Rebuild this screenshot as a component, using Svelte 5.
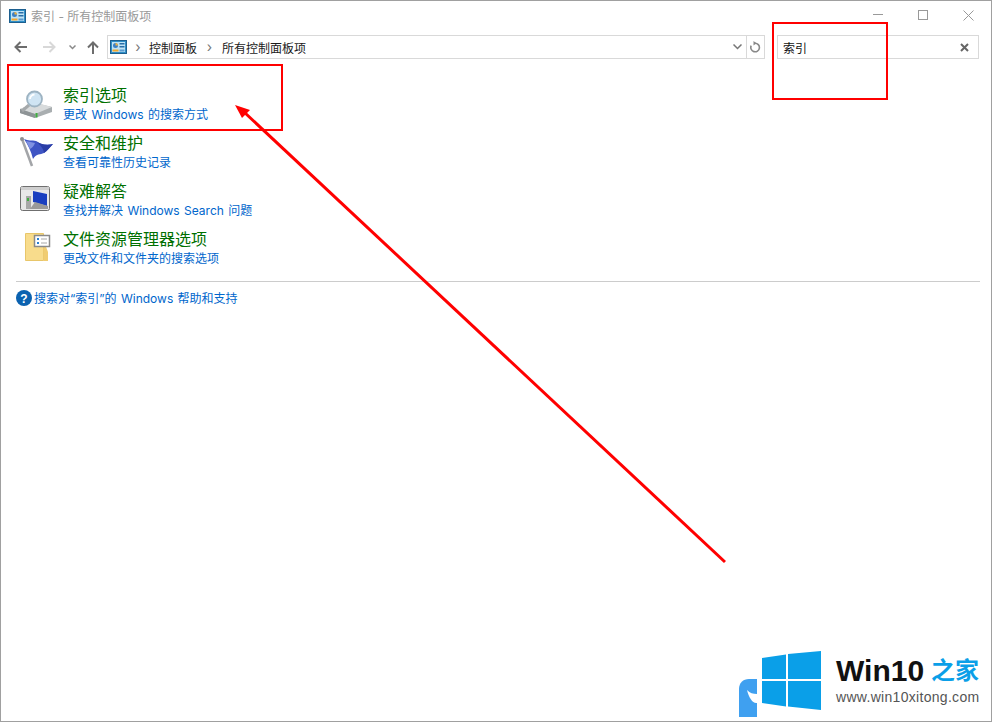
<script>
  const items = [
    { id: 'index', title: '索引选项', desc: '更改 Windows 的搜索方式' },
    { id: 'flag', title: '安全和维护', desc: '查看可靠性历史记录' },
    { id: 'trouble', title: '疑难解答', desc: '查找并解决 Windows Search 问题' },
    { id: 'folder', title: '文件资源管理器选项', desc: '更改文件和文件夹的搜索选项' }
  ];
</script>

{#snippet cpIcon()}
  <svg class="cp" width="17" height="14" viewBox="0 0 17 14">
    <rect x="0.5" y="0.5" width="16" height="13" fill="#2f8fc8" stroke="#1d5f8f" />
    <rect x="2" y="2" width="13" height="10" fill="#bfe3f5" />
    <circle cx="5.5" cy="5.5" r="2.5" fill="#3b7fc4" />
    <path d="M5.5 5.5V3a2.5 2.5 0 0 1 2.5 2.5z" fill="#f2b33d" />
    <rect x="9.5" y="3" width="5" height="1.5" fill="#2a6ea8" />
    <rect x="9.5" y="6" width="5" height="1.5" fill="#2a6ea8" />
    <rect x="2.5" y="9.5" width="6" height="2" fill="#f0a830" />
    <rect x="9.5" y="9.5" width="5" height="2" fill="#5b9bd0" />
  </svg>
{/snippet}

<div class="window">
  <header class="titlebar">
    {@render cpIcon()}
    <span class="wintitle">索引 - 所有控制面板项</span>
    <div class="caption">
      <svg width="10" height="2" viewBox="0 0 10 2"><path d="M0 .5h10" stroke="#999" /></svg>
      <svg width="10" height="10" viewBox="0 0 10 10"><rect x=".5" y=".5" width="9" height="9" fill="none" stroke="#999" /></svg>
      <svg width="11" height="11" viewBox="0 0 11 11"><path d="M.5.5l10 10M10.5.5l-10 10" stroke="#999" fill="none" /></svg>
    </div>
  </header>

  <nav class="navbar">
    <div class="navbtns">
      <svg width="14" height="12" viewBox="0 0 14 12"><path d="M13 6H2M6.500 1L1.500 6l5 5" fill="none" stroke="#6d6d6d" stroke-width="2" /></svg>
      <svg width="14" height="12" viewBox="0 0 14 12"><path d="M1 6h11M7.500 1l5 5-5 5" fill="none" stroke="#d8d8d8" stroke-width="2" /></svg>
      <svg width="7" height="5" viewBox="0 0 7 5"><path d="M.5.500l3 3 3-3" fill="none" stroke="#8a8a8a" stroke-width="1.500" /></svg>
      <svg width="12" height="13" viewBox="0 0 12 13"><path d="M6 13V2M1 6.500l5-5 5 5" fill="none" stroke="#6d6d6d" stroke-width="2" /></svg>
    </div>
    <div class="address">
      {@render cpIcon()}
      <span class="chev first">›</span>
      <span>控制面板</span>
      <span class="chev second">›</span>
      <span>所有控制面板项</span>
      <svg class="dropdown" width="9" height="6" viewBox="0 0 9 6"><path d="M.500.500l4 4 4-4" fill="none" stroke="#777" stroke-width="1.500" /></svg>
      <div class="refresh">
        <svg width="11" height="12" viewBox="0 0 11 12"><path d="M5 2.200a4.300 4.300 0 1 1-3.800 2.500" fill="none" stroke="#888" stroke-width="1.600" /><path d="M3.500 0l3 2.200-3 2.200z" fill="#888" /></svg>
      </div>
    </div>
    <div class="search">
      <span>索引</span>
      <svg width="9" height="9" viewBox="0 0 9 9"><path d="M1 1l7 7M8 1L1 8" stroke="#666" stroke-width="2" /></svg>
    </div>
  </nav>

  <main class="content">
    <ul class="results">
      {#each items as item (item.id)}
        <li>
          <div class="icon">
            {#if item.id === 'index'}
              <svg width="36" height="36" viewBox="0 0 36 36">
                <path d="M2 25l15-6 17 4v5L17 34 2 29z" fill="#a9aeb0" />
                <path d="M2 25l15 5 17-7-15-4z" fill="#d8dbdc" />
                <path d="M17 30v4L2 29v-4z" fill="#8e9496" />
                <rect x="17.500" y="29" width="2" height="4.500" fill="#3fae3f" />
                <path d="M4 27l7-6" stroke="#a5a9ab" stroke-width="3" />
                <circle cx="16.500" cy="15" r="7.500" fill="#cfe4f3" stroke="#9db3c2" stroke-width="1.800" />
                <path d="M12 15a4.500 4.500 0 0 1 4.500-4.500" fill="none" stroke="#fff" stroke-width="1.800" />
              </svg>
            {:else if item.id === 'flag'}
              <svg width="36" height="36" viewBox="0 0 36 36">
                <path d="M4 7l10 27" stroke="#a3a5a8" stroke-width="2.500" />
                <circle cx="4" cy="7" r="2" fill="#8d8f92" />
                <path d="M6 7c4 2 8 1 12 2 4 3 10 5 17 3-3 3-6 7-9 9-4 2-7 0-11 6C13 19 10 13 6 7z" fill="#3f55c4" />
                <path d="M8 9c3 1 6 1 9 2-1 3-3 5-5 6z" fill="#8092e2" />
                <path d="M18 9c4 3 10 5 17 3-3 3-6 7-9 9 0-4-4-8-8-12z" fill="#2a3da6" />
              </svg>
            {:else if item.id === 'trouble'}
              <svg width="36" height="36" viewBox="0 0 36 36">
                <rect x="2.500" y="6.500" width="29" height="24" rx="2" fill="#e8e8e8" stroke="#6f6f6f" />
                <rect x="3" y="7" width="28" height="3" fill="#cfcfcf" />
                <rect x="8" y="16" width="5" height="13" fill="#a8a8a8" />
                <rect x="9" y="18" width="2" height="3" fill="#3fae3f" />
                <path d="M15 11l14 3v12l-14-4z" fill="#1a3fc0" />
                <path d="M12 29l5-7 13 4v3z" fill="#9a9a9a" />
              </svg>
            {:else}
              <svg width="36" height="36" viewBox="0 0 36 36">
                <path d="M7.500 5.500h18v27h-18z" fill="#f8dc8c" stroke="#e8c66a" />
                <path d="M25.500 12v21H30V24z" fill="#f0cc72" />
                <rect x="16.500" y="7.500" width="15" height="11" fill="#fff" stroke="#8a8a8a" stroke-width="1.500" />
                <path d="M19 11h2M19 15h2" stroke="#2a7fd0" stroke-width="2" />
                <path d="M23 11h6M23 15h6" stroke="#a8a8a8" />
              </svg>
            {/if}
          </div>
          <div class="text">
            <a class="title" href="#top">{item.title}</a>
            <a class="desc" href="#top">{item.desc}</a>
          </div>
        </li>
      {/each}
    </ul>
    <hr />
    <div class="help">
      <svg width="16" height="16" viewBox="0 0 16 16">
        <circle cx="8" cy="8" r="8" fill="#0b62b0" />
        <text x="8" y="12.500" text-anchor="middle" font-size="12" font-weight="700" fill="#fff" font-family="Liberation Sans">?</text>
      </svg>
      <a href="#top">搜索对“索引”的 Windows 帮助和支持</a>
    </div>
  </main>

  <svg class="annot" width="992" height="722" viewBox="0 0 992 722">
    <rect x="8" y="65" width="274" height="65" fill="none" stroke="#f00" stroke-width="2" />
    <rect x="773" y="23" width="114" height="76" fill="none" stroke="#f00" stroke-width="2" />
    <path d="M725 562L244 112" fill="none" stroke="#f00" stroke-width="3" />
    <path d="M235 105l15 5-8 8z" fill="#f00" />
  </svg>

  <div class="watermark">
    <svg class="logo" width="84" height="72" viewBox="0 0 84 72">
      <path d="M0 42c0-6 4-10 10-10h8v38H0z" fill="#3fa0f0" />
      <path d="M8 43c3 3 6 4 10 4v9c-4 1-8-5-10-13z" fill="#fff" />
      <path d="M23 11l24-3.500V32H23zM49 7l33-3v28H49zM23 34h24v25.500L23 56zM49 34h33v29l-33-3.500z" fill="#0a9fe8" />
    </svg>
    <div class="brand">
      <div class="brand-top"><b>Win10</b><span>之家</span></div>
      <div class="url">www.win10xitong.com</div>
    </div>
  </div>
</div>

<style>
  :global(body) {
    margin: 0;
    background: #fff;
  }

  .window {
    position: relative;
    width: 992px;
    height: 722px;
    box-sizing: border-box;
    border: 1px solid #a0a0a0;
    background: #fff;
    overflow: hidden;
    font-family: Inter, "Noto Sans CJK SC", sans-serif;
    font-size: 12px;
    color: #1a1a1a;
  }

  a {
    text-decoration: none;
  }

  .titlebar {
    display: flex;
    align-items: center;
    height: 29px;
    padding-left: 8px;
  }

  .cp {
    flex: none;
  }

  .wintitle {
    margin-left: 5px;
    color: #999;
  }

  .caption {
    margin-left: auto;
    display: flex;
    align-items: center;
    gap: 35px;
    padding-right: 17px;
    padding-bottom: 1px;
  }

  .navbar {
    display: flex;
    align-items: center;
    height: 24px;
    margin-top: 5px;
  }

  .navbtns {
    display: flex;
    align-items: center;
    width: 106px;
    padding-left: 13px;
    box-sizing: border-box;
    gap: 14px;
  }

  .navbtns svg:nth-child(3) {
    margin-left: -1px;
    margin-right: -3px;
  }

  .address {
    display: flex;
    align-items: center;
    width: 658px;
    height: 24px;
    box-sizing: border-box;
    border: 1px solid #d9d9d9;
    padding-left: 2px;
  }

  .chev {
    text-align: center;
    color: #777;
    font-size: 14px;
    line-height: 1;
  }

  .chev.first {
    width: 22px;
  }

  .chev.second {
    width: 25px;
  }

  .dropdown {
    margin-left: auto;
    margin-right: 4px;
  }

  .refresh {
    display: flex;
    align-items: center;
    justify-content: center;
    width: 17px;
    height: 22px;
    border-left: 1px solid #d9d9d9;
  }

  .search {
    display: flex;
    align-items: center;
    justify-content: space-between;
    width: 202px;
    height: 24px;
    margin-left: 12px;
    box-sizing: border-box;
    border: 1px solid #d9d9d9;
    padding: 0 9px 0 5px;
    color: #111;
  }

  .content {
    padding: 16px 11px 0 15px;
  }

  .results {
    list-style: none;
    margin: 0;
    padding: 0;
  }

  .results li {
    display: flex;
    height: 48px;
  }

  .icon {
    width: 47px;
    flex: none;
    padding-top: 9px;
    padding-left: 2px;
    box-sizing: border-box;
  }

  .text {
    display: flex;
    flex-direction: column;
    padding-top: 10px;
  }

  .title {
    color: #007000;
    font-size: 16px;
    line-height: 21px;
  }

  .desc {
    color: #0066cc;
    font-size: 12px;
    line-height: 17px;
    word-spacing: 1px;
  }

  hr {
    margin: 14px 0 0;
    border: none;
    border-top: 1px solid #ccc;
  }

  .help {
    display: flex;
    align-items: center;
    gap: 2px;
    margin-top: 7px;
  }

  .help a {
    color: #0066cc;
    word-spacing: 1px;
  }

  .annot {
    position: absolute;
    left: -1px;
    top: -1px;
    pointer-events: none;
  }

  .watermark {
    position: absolute;
    right: 10px;
    bottom: 2px;
    display: flex;
    align-items: flex-start;
    width: 242px;
    height: 72px;
    background: #fff;
  }

  .logo {
    flex: none;
  }

  .brand {
    margin-left: 13px;
    padding-top: 8px;
  }

  .brand-top {
    display: flex;
    align-items: center;
    gap: 7px;
    line-height: 32px;
  }

  .brand-top b {
    font-family: "Liberation Sans", sans-serif;
    font-size: 30px;
    color: #111;
  }

  .brand-top span {
    font-size: 24px;
    font-weight: 700;
    color: #0a9fe8;
  }

  .url {
    font-family: "Liberation Sans", sans-serif;
    font-size: 14px;
    color: #555;
    line-height: 16px;
    margin-top: 2px;
    letter-spacing: 0.300px;
  }
</style>
